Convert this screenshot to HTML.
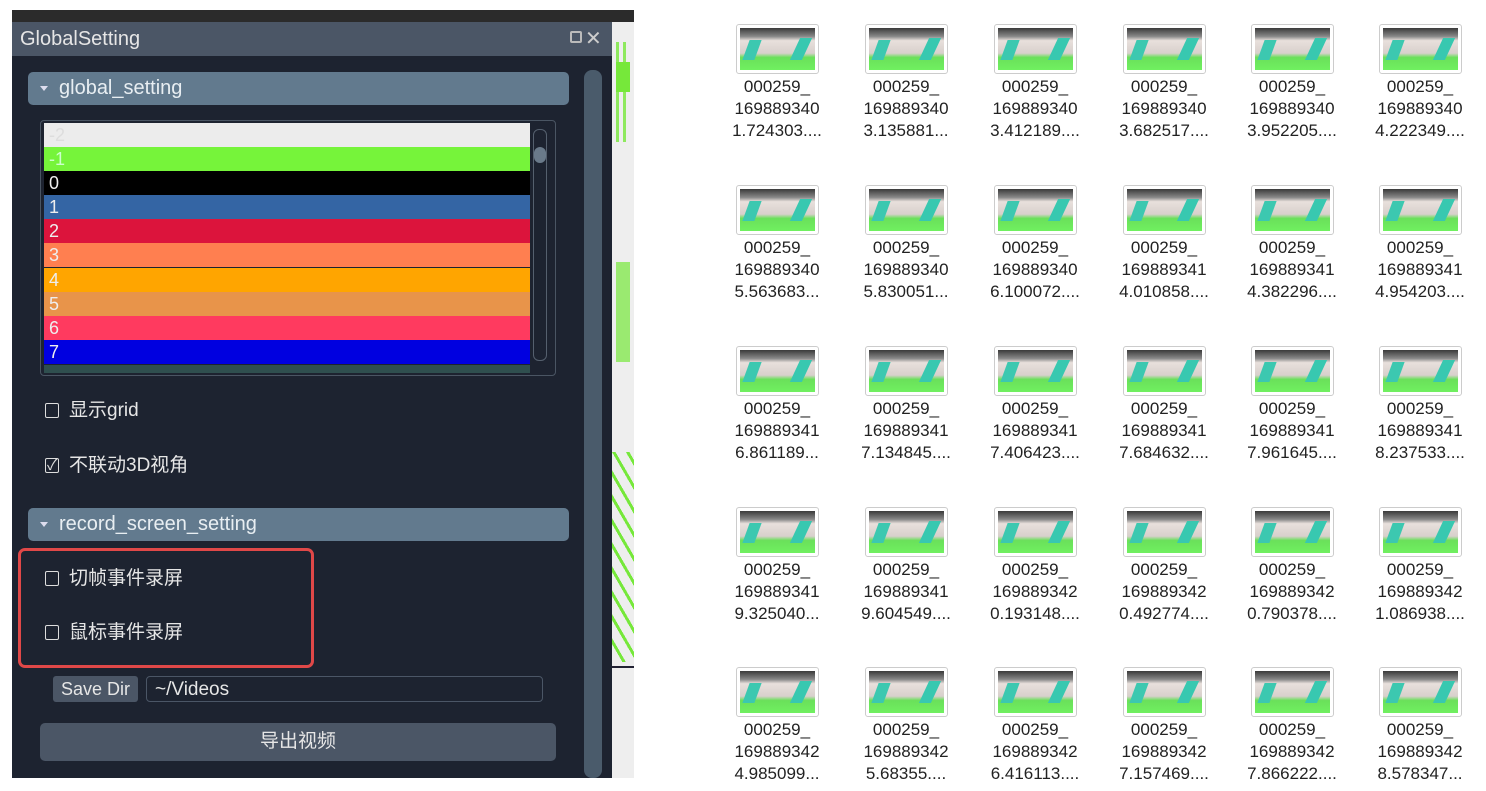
<!DOCTYPE html>
<html><head><meta charset="utf-8"><style>
*{margin:0;padding:0;box-sizing:border-box}
body{width:1486px;height:791px;background:#fff;position:relative;overflow:hidden;font-family:"Liberation Sans","Noto Sans CJK SC",sans-serif}
.a{position:absolute}
.txt{color:#e6e6e6;font-size:19px;line-height:24px}
.row{position:absolute;left:44px;width:486px;height:24px;font-size:18px;line-height:24px;padding-left:5px}
.cb{position:absolute;width:14px;height:15px;border:1.5px solid #ddd;border-radius:2px}
.hdr{position:absolute;left:28px;width:541px;height:33px;background:#627a8e;border-radius:5px;color:#e8eef2;font-size:20px;line-height:33px;padding-left:31px}
.hdr:before{content:"";position:absolute;left:12px;top:14px;border-left:4px solid transparent;border-right:4px solid transparent;border-top:5px solid #dde}
.it{position:absolute;width:130px;text-align:center;color:#222;font-size:17px;line-height:22px}
.th{margin:0 auto;width:83px;height:50px;border:1px solid #ccc;border-radius:3px;padding:3px;background:#fff;margin-bottom:2px}
.im{width:100%;height:100%;background:linear-gradient(#3a3a3a 0,#888 20%,#e8e0dc 30%,#d8d0cc 60%,#6ae05a 70%,#70f060 100%);position:relative;overflow:hidden}
.im:before{content:"";position:absolute;left:6px;top:12px;width:12px;height:20px;background:#3cc8b0;transform:skewX(-20deg)}
.im:after{content:"";position:absolute;right:8px;top:10px;width:12px;height:22px;background:#38c8b0;transform:skewX(-25deg)}
</style></head><body>
<div class="a" style="left:12px;top:10px;width:622px;height:12px;background:#2b2b2b"></div>
<div class="a" style="left:12px;top:22px;width:600px;height:756px;background:#1d2330"></div>
<div class="a" style="left:12px;top:22px;width:600px;height:34px;background:#4b5666"></div>
<div class="a txt" style="left:20px;top:27px;font-size:20px">GlobalSetting</div>
<div class="a" style="left:570px;top:31px;width:12px;height:12px;border:2px solid #bbb;border-radius:2px"></div>
<div class="a" style="left:585px;top:26px;color:#ccc;font-size:20px">✕</div>
<div class="a" style="left:612px;top:22px;width:22px;height:756px;background:#eeeeee;overflow:hidden">
<div class="a" style="left:4px;top:20px;width:12px;height:100px;background:repeating-linear-gradient(90deg,#76e83a 0 3px,transparent 3px 7px);opacity:.8"></div>
<div class="a" style="left:4px;top:40px;width:14px;height:30px;background:#76e83a"></div>
<div class="a" style="left:4px;top:240px;width:14px;height:100px;background:#76e83a;opacity:.7"></div>
<div class="a" style="left:0;top:430px;width:22px;height:210px;background:repeating-linear-gradient(60deg,transparent 0 9px,#76e83a 9px 12px)"></div>
<div class="a" style="left:0;top:644px;width:22px;height:2px;background:#223"></div>
</div>
<div class="a" style="left:584px;top:70px;width:18px;height:708px;background:#4a5b6b;border-radius:8px"></div>
<div class="hdr" style="top:72px">global_setting</div>
<div class="a" style="left:40px;top:120px;width:516px;height:256px;border:1px solid #4a5563;border-radius:4px;overflow:hidden">
<div class="a" style="left:492px;top:8px;width:14px;height:232px;border:1px solid #55606e;border-radius:6px"></div>
<div class="a" style="left:493px;top:26px;width:12px;height:16px;background:#6a7a8a;border-radius:6px"></div>
</div>
<div class="row" style="top:123px;background:#ececec;color:#ddd">-2</div>
<div class="row" style="top:147px;background:#76f43a;color:#cfc">-1</div>
<div class="row" style="top:171px;background:#000;color:#eee">0</div>
<div class="row" style="top:195px;background:#3465a4;color:#eee">1</div>
<div class="row" style="top:219px;background:#dc143c;color:#eee">2</div>
<div class="row" style="top:243px;background:#ff7f50;color:#eee">3</div>
<div class="row" style="top:268px;background:#ffa500;color:#eee">4</div>
<div class="row" style="top:292px;background:#e8944a;color:#eee">5</div>
<div class="row" style="top:316px;background:#ff3a5f;color:#eee">6</div>
<div class="row" style="top:340px;background:#0000e0;color:#eee">7</div>
<div class="row" style="top:365px;height:8px;background:#2f4f4f"></div>
<div class="cb" style="left:45px;top:403px"></div><div class="a txt" style="left:69px;top:399px">显示grid</div>
<div class="cb" style="left:45px;top:458px"></div><div class="a" style="left:47px;top:454px;color:#ddd;font-size:15px">✓</div><div class="a txt" style="left:69px;top:454px">不联动3D视角</div>
<div class="hdr" style="top:508px">record_screen_setting</div>
<div class="a" style="left:18px;top:548px;width:296px;height:120px;border:3px solid #e04848;border-radius:7px"></div>
<div class="cb" style="left:45px;top:571px"></div><div class="a txt" style="left:69px;top:567px">切帧事件录屏</div>
<div class="cb" style="left:45px;top:625px"></div><div class="a txt" style="left:69px;top:621px">鼠标事件录屏</div>
<div class="a" style="left:53px;top:676px;width:85px;height:26px;background:#4b5666;border-radius:3px;color:#e6e6e6;font-size:18px;line-height:26px;text-align:center">Save Dir</div>
<div class="a" style="left:146px;top:676px;width:397px;height:26px;border:1px solid #4b5666;border-radius:4px;color:#e6e6e6;font-size:19px;line-height:26px;padding-left:8px">~/Videos</div>
<div class="a" style="left:40px;top:723px;width:516px;height:38px;background:#4b5666;border-radius:5px;color:#e6e6e6;font-size:19px;line-height:38px;text-align:center">导出视频</div>

<div class="it" style="left:712px;top:24px"><div class="th"><div class="im"></div></div>000259_<br>169889340<br>1.724303....</div>
<div class="it" style="left:841px;top:24px"><div class="th"><div class="im"></div></div>000259_<br>169889340<br>3.135881...</div>
<div class="it" style="left:970px;top:24px"><div class="th"><div class="im"></div></div>000259_<br>169889340<br>3.412189....</div>
<div class="it" style="left:1099px;top:24px"><div class="th"><div class="im"></div></div>000259_<br>169889340<br>3.682517....</div>
<div class="it" style="left:1227px;top:24px"><div class="th"><div class="im"></div></div>000259_<br>169889340<br>3.952205....</div>
<div class="it" style="left:1355px;top:24px"><div class="th"><div class="im"></div></div>000259_<br>169889340<br>4.222349....</div>

<div class="it" style="left:712px;top:185px"><div class="th"><div class="im"></div></div>000259_<br>169889340<br>5.563683...</div>
<div class="it" style="left:841px;top:185px"><div class="th"><div class="im"></div></div>000259_<br>169889340<br>5.830051...</div>
<div class="it" style="left:970px;top:185px"><div class="th"><div class="im"></div></div>000259_<br>169889340<br>6.100072....</div>
<div class="it" style="left:1099px;top:185px"><div class="th"><div class="im"></div></div>000259_<br>169889341<br>4.010858....</div>
<div class="it" style="left:1227px;top:185px"><div class="th"><div class="im"></div></div>000259_<br>169889341<br>4.382296....</div>
<div class="it" style="left:1355px;top:185px"><div class="th"><div class="im"></div></div>000259_<br>169889341<br>4.954203....</div>

<div class="it" style="left:712px;top:346px"><div class="th"><div class="im"></div></div>000259_<br>169889341<br>6.861189...</div>
<div class="it" style="left:841px;top:346px"><div class="th"><div class="im"></div></div>000259_<br>169889341<br>7.134845....</div>
<div class="it" style="left:970px;top:346px"><div class="th"><div class="im"></div></div>000259_<br>169889341<br>7.406423....</div>
<div class="it" style="left:1099px;top:346px"><div class="th"><div class="im"></div></div>000259_<br>169889341<br>7.684632....</div>
<div class="it" style="left:1227px;top:346px"><div class="th"><div class="im"></div></div>000259_<br>169889341<br>7.961645....</div>
<div class="it" style="left:1355px;top:346px"><div class="th"><div class="im"></div></div>000259_<br>169889341<br>8.237533....</div>

<div class="it" style="left:712px;top:507px"><div class="th"><div class="im"></div></div>000259_<br>169889341<br>9.325040...</div>
<div class="it" style="left:841px;top:507px"><div class="th"><div class="im"></div></div>000259_<br>169889341<br>9.604549....</div>
<div class="it" style="left:970px;top:507px"><div class="th"><div class="im"></div></div>000259_<br>169889342<br>0.193148....</div>
<div class="it" style="left:1099px;top:507px"><div class="th"><div class="im"></div></div>000259_<br>169889342<br>0.492774....</div>
<div class="it" style="left:1227px;top:507px"><div class="th"><div class="im"></div></div>000259_<br>169889342<br>0.790378....</div>
<div class="it" style="left:1355px;top:507px"><div class="th"><div class="im"></div></div>000259_<br>169889342<br>1.086938....</div>

<div class="it" style="left:712px;top:667px"><div class="th"><div class="im"></div></div>000259_<br>169889342<br>4.985099...</div>
<div class="it" style="left:841px;top:667px"><div class="th"><div class="im"></div></div>000259_<br>169889342<br>5.68355....</div>
<div class="it" style="left:970px;top:667px"><div class="th"><div class="im"></div></div>000259_<br>169889342<br>6.416113....</div>
<div class="it" style="left:1099px;top:667px"><div class="th"><div class="im"></div></div>000259_<br>169889342<br>7.157469....</div>
<div class="it" style="left:1227px;top:667px"><div class="th"><div class="im"></div></div>000259_<br>169889342<br>7.866222....</div>
<div class="it" style="left:1355px;top:667px"><div class="th"><div class="im"></div></div>000259_<br>169889342<br>8.578347...</div>
</body></html>
